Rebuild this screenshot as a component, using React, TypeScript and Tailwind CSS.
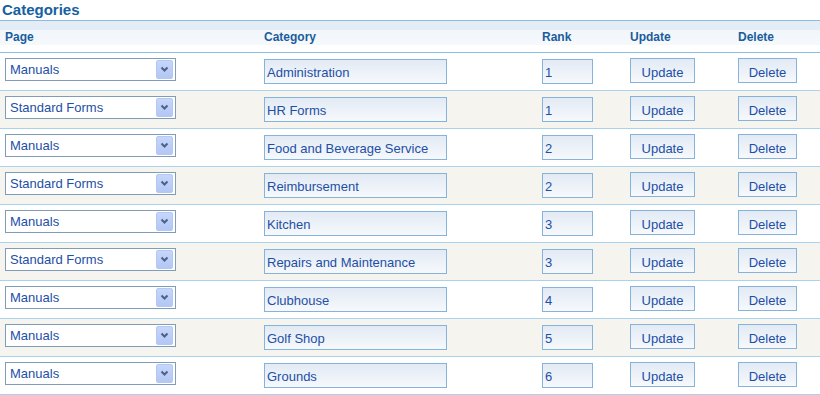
import React from "react";

const rows = [
  { page: "Manuals", category: "Administration", rank: "1" },
  { page: "Standard Forms", category: "HR Forms", rank: "1" },
  { page: "Manuals", category: "Food and Beverage Service", rank: "2" },
  { page: "Standard Forms", category: "Reimbursement", rank: "2" },
  { page: "Manuals", category: "Kitchen", rank: "3" },
  { page: "Standard Forms", category: "Repairs and Maintenance", rank: "3" },
  { page: "Manuals", category: "Clubhouse", rank: "4" },
  { page: "Manuals", category: "Golf Shop", rank: "5" },
  { page: "Manuals", category: "Grounds", rank: "6" },
];

const grid = "grid grid-cols-[259px_278px_88px_108px_1fr]";
const field =
  "h-[25px] border border-[#86b3dc] bg-gradient-to-b from-[#e2eaf4] to-[#f6f9fc] text-[13px] text-[#1d4fa6] leading-[26px]";

function PageSelect({ value }: { value: string }) {
  return (
    <div className="mt-[5px] flex h-[23px] w-[171px] items-center justify-between border border-[#7f9db9] bg-white pl-[4px] pr-[1px] text-[13px] text-[#1d4fa6]">
      <span>{value}</span>
      <span className="mr-[1px] flex h-[19px] w-[17px] items-center justify-center rounded-[2px] border border-[#b5c8f2] bg-gradient-to-b from-[#c6d6fb] to-[#b3c7f5]">
        <svg width="9" height="7" viewBox="0 0 9 7">
          <path d="M1.5 1.5 L4.5 4.5 L7.5 1.5" fill="none" stroke="#4d6185" strokeWidth="2" />
        </svg>
      </span>
    </div>
  );
}

export default function App() {
  return (
    <div className="h-[395px] w-[820px] overflow-hidden bg-white font-['Liberation_Sans',Arial,sans-serif]">
      <h1 className="h-[20px] pl-[2px] pt-[1px] text-[15px] font-bold leading-[17px] text-[#16609f]">
        Categories
      </h1>

      {/* Header */}
      <div
        className={`${grid} h-[33px] border-y border-[#89bde3] bg-[linear-gradient(to_bottom,#e4ecf5_0px,#e4ecf5_9px,#f1f6fb_9px,#f5f9fc_24px,#ffffff_24px)] text-[12px] font-bold text-[#1b5c9c]`}
      >
        {["Page", "Category", "Rank", "Update", "Delete"].map((h) => (
          <div key={h} className="pl-[5px] pt-[9px] leading-[14px]">
            {h}
          </div>
        ))}
      </div>

      {/* Rows */}
      {rows.map((r, i) => (
        <div
          key={i}
          className={`${grid} h-[38px] border-b border-[#a9d2ef] ${i % 2 === 1 ? "bg-[#f5f4ee]" : "bg-white"}`}
        >
          <div className="pl-[5px]">
            <PageSelect value={r.page} />
          </div>
          <div className="pl-[5px] pt-[6px]">
            <div className={`${field} w-[183px] pl-[2px]`}>{r.category}</div>
          </div>
          <div className="pl-[5px] pt-[6px]">
            <div className={`${field} w-[51px] pl-[2px]`}>{r.rank}</div>
          </div>
          <div className="pl-[5px] pt-[5px]">
            <button className={`${field} w-[65px] pt-[1px] text-center`}>Update</button>
          </div>
          <div className="pl-[5px] pt-[5px]">
            <button className={`${field} w-[59px] pt-[1px] text-center`}>Delete</button>
          </div>
        </div>
      ))}
    </div>
  );
}
